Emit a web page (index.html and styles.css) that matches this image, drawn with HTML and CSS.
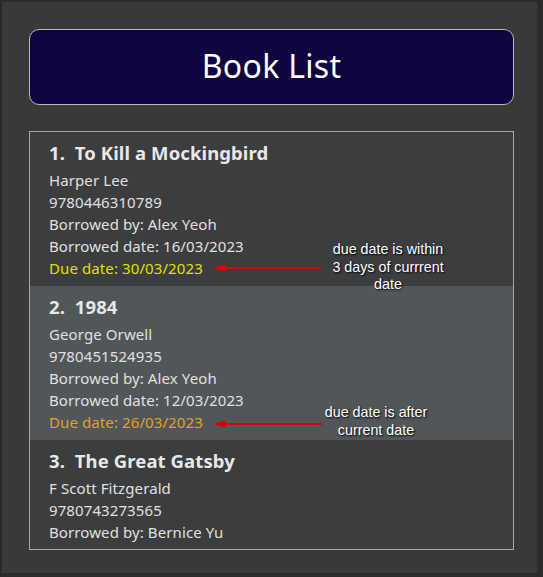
FILE: index.html
```html
<!DOCTYPE html>
<html>
<head>
<meta charset="utf-8">
<link rel="stylesheet" href="styles.css">
</head>
<body>
<div class="window">
  <div class="header"><h1 class="title">Book List</h1></div>
  <div class="list">
    <div class="card">
      <div class="book-title">1.&nbsp; To Kill a Mockingbird</div>
      <div class="line">Harper Lee</div>
      <div class="line">9780446310789</div>
      <div class="line">Borrowed by: Alex Yeoh</div>
      <div class="line">Borrowed date: 16/03/2023</div>
      <div class="line due-soon">Due date: 30/03/2023</div>
    </div>
    <div class="card alt">
      <div class="book-title">2.&nbsp; 1984</div>
      <div class="line">George Orwell</div>
      <div class="line">9780451524935</div>
      <div class="line">Borrowed by: Alex Yeoh</div>
      <div class="line">Borrowed date: 12/03/2023</div>
      <div class="line due-later">Due date: 26/03/2023</div>
    </div>
    <div class="card">
      <div class="book-title">3.&nbsp; The Great Gatsby</div>
      <div class="line">F Scott Fitzgerald</div>
      <div class="line">9780743273565</div>
      <div class="line">Borrowed by: Bernice Yu</div>
      <div class="line">Borrowed date: 10/03/2023</div>
      <div class="line">Due date: 24/03/2023</div>
    </div>
  </div>

  <svg class="arrow arrow-1" width="110" height="10" viewBox="0 0 110 10"><path d="M10 5 H109" stroke="#e00000" stroke-width="2"/><path d="M0 5 L13 1.5 L13 8.5 Z" fill="#e00000"/></svg>
  <div class="note-text n1">due date is within<br>3 days of currrent<br>date</div>
  <svg class="arrow arrow-2" width="110" height="10" viewBox="0 0 110 10"><path d="M10 5 H109" stroke="#e00000" stroke-width="2"/><path d="M0 5 L13 1.5 L13 8.5 Z" fill="#e00000"/></svg>
  <div class="note-text n2">due date is after<br>current date</div>
</div>
</body>
</html>
```
FILE: styles.css
```css
html, body {
  margin: 0;
  padding: 0;
  background: #2a2a2a;
}
.window {
  position: relative;
  width: 536px;
  height: 571px;
  margin: 2px 0 0 2px;
  background: #393939;
  border-right: 1px solid #2e2e2e;
  box-sizing: border-box;
  padding: 27px 23px 0 27px;
  overflow: hidden;
  font-family: "Noto Sans", "Open Sans", sans-serif;
}
.header {
  height: 76px;
  box-sizing: border-box;
  background: #10063f;
  border: 1px solid #b8b8c8;
  border-radius: 10px;
  display: flex;
  align-items: center;
  justify-content: center;
  padding-bottom: 3px;
}
.title {
  margin: 0;
  color: #ffffff;
  font-size: 32px;
  font-weight: 400;
  letter-spacing: 0.3px;
}
.list {
  margin-top: 26px;
  height: 419px;
  box-sizing: border-box;
  border: 1px solid #a8a8a8;
  background: #3c3d3f;
  overflow: hidden;
}
.card {
  padding: 9px 20px 6px 19px;
  height: 154px;
  box-sizing: border-box;
  color: #e0e0e0;
}
.card.alt {
  background: #515658;
}
.book-title {
  font-size: 18.5px;
  font-weight: 700;
  line-height: 24px;
  margin-bottom: 4px;
  color: #e8e8e8;
  letter-spacing: 0.1px;
}
.line {
  font-size: 15px;
  line-height: 22px;
  letter-spacing: 0.1px;
}
.due-soon { color: #e0e000; }
.due-later { color: #e5a020; }
.arrow {
  position: absolute;
}
.arrow-1 { left: 210px; top: 261px; }
.arrow-2 { left: 211px; top: 417px; }
.note-text {
  position: absolute;
  font-family: "Liberation Sans", Arial, sans-serif;
  font-size: 14.3px;
  line-height: 17.5px;
  color: #ffffff;
  text-align: center;
  text-shadow: 1px 1px 2px #000;
  white-space: nowrap;
}
.n1 { left: 316px; top: 239px; width: 140px; }
.n2 { left: 306px; top: 402px; width: 136px; }
```
